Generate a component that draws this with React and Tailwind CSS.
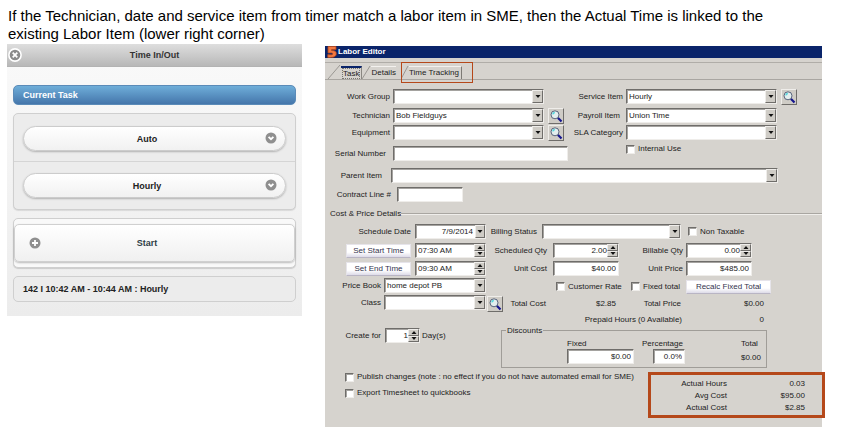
import { useId } from 'react';
import { clsx } from 'clsx';

const sunken = 'border border-t-[#6f6d6a] border-l-[#6f6d6a] border-r-[#efedea] border-b-[#efedea] bg-white shadow-[inset_1px_1px_0_#a5a3a0]';
const raised = 'border border-t-[#efedea] border-l-[#efedea] border-r-[#6f6d6a] border-b-[#6f6d6a] bg-[#cfccc6]';

const Triangle = ({ up = false }) => (
    <svg viewBox="0 0 6 3" className="w-[6px] h-[3px]">
        <path d={up ? 'M0.5 3L3 0L5.5 3Z' : 'M0.5 0L5.5 0L3 3Z'} fill="#111" />
    </svg>
);

const Select = ({ id, value = '', className, label }) => (
    <div className={clsx('relative h-[15px] min-w-0', className)}>
        <select id={id} aria-label={label} className={clsx('appearance-none block w-full h-full pl-[2px] pr-3 leading-none', sunken)}>
            <option>{value}</option>
        </select>
        <span className={clsx('absolute right-px top-px bottom-px w-[11px] flex items-center justify-center pointer-events-none', raised)}>
            <Triangle />
        </span>
    </div>
);

const TextBox = ({ id, value = '', className, label }) => (
    <input id={id} aria-label={label} defaultValue={value} className={clsx('block h-[15px] min-w-0 px-[2px]', sunken, className)} />
);

const Spinner = ({ id, value, className, label, right = false }) => (
    <div className={clsx('flex h-[15px] min-w-0', sunken, className)}>
        <input id={id} aria-label={label} defaultValue={value} className={clsx('flex-1 min-w-0 w-0 pl-[2px] bg-transparent', right && 'text-right')} />
        <span className="flex flex-col w-[11px]">
            <button aria-label="Increase" className={clsx('flex-1 flex items-center justify-center', raised)}><Triangle up /></button>
            <button aria-label="Decrease" className={clsx('flex-1 flex items-center justify-center', raised)}><Triangle /></button>
        </span>
    </div>
);

const SearchButton = ({ label, className }) => (
    <button aria-label={label} className={clsx('w-4 h-4 shrink-0 flex items-center justify-center', raised, className)}>
        <svg viewBox="0 0 14 14" className="w-[14px] h-[14px]">
            <path d="M8.8 8.8L12.5 12.5" stroke="#15158f" strokeWidth="2.2" />
            <circle cx="6" cy="5.8" r="4" fill="#e3eeee" stroke="#4a5570" strokeWidth="0.9" />
            <path d="M3.8 5.4A2.2 2.2 0 0 1 5.8 3.5" stroke="#47d5dc" strokeWidth="1.3" fill="none" />
        </svg>
    </button>
);

const CheckBox = ({ children, className }) => (
    <label className={clsx('flex items-center gap-[3px] whitespace-nowrap', className)}>
        <input type="checkbox" className={clsx('appearance-none w-[9px] h-[9px] shrink-0', sunken)} />
        {children}
    </label>
);

const PlainButton = ({ children, className }) => (
    <button className={clsx('h-[14px] border border-[#e6e4ea] border-b-[#b9b5c4] bg-gradient-to-b from-white from-60% to-[#dddbe8] text-[#33334d] whitespace-nowrap', className)}>
        {children}
    </button>
);

// label + control on one line, render gets the id for the control
const Field = ({ label, labelClass, className, render }) => {
    const id = useId();
    return (
        <div className={clsx('flex items-center h-[15px]', className)}>
            <label htmlFor={id} className={clsx('shrink-0 text-right whitespace-nowrap', labelClass)}>{label}</label>
            {render(id)}
        </div>
    );
};

const MobileSelect = ({ value }) => (
    <div className="relative h-[25px]">
        <select aria-label={value} className="appearance-none block w-full h-full pr-[15px] text-center [text-align-last:center] rounded-full border border-[#ccc] bg-gradient-to-b from-white to-[#f1f1f1] shadow-[0_1px_2px_rgba(0,0,0,0.25)] font-bold text-[#222]">
            <option>{value}</option>
        </select>
        <svg viewBox="0 0 12 12" className="absolute right-[9px] top-[6px] w-3 h-3 pointer-events-none">
            <circle cx="6" cy="6" r="5.5" fill="#8f8f8f" />
            <path d="M3.6 4.8L6 7.2L8.4 4.8" stroke="#fff" strokeWidth="1.8" fill="none" />
        </svg>
    </div>
);

const TimeInOut = () => (
    <section className="flex-[295] min-w-0 h-[272px] bg-gradient-to-b from-[#fafafa] to-[#ececec] text-[9px] leading-3 text-[#222] font-bold">
        <header className="relative h-[23px] flex items-center justify-center bg-gradient-to-b from-[#dedede] to-[#b8b8b8] border-b border-[#b3b3b3] text-[#333]">
            <button aria-label="Close" className="absolute left-px top-1">
                <svg viewBox="0 0 14 14" className="w-[14px] h-[14px]">
                    <circle cx="7" cy="7" r="6.1" fill="#8b8b8b" stroke="#fff" strokeWidth="1.6" />
                    <path d="M4.7 4.7L9.3 9.3M9.3 4.7L4.7 9.3" stroke="#fff" strokeWidth="1.8" />
                </svg>
            </button>
            <h2>Time In/Out</h2>
        </header>
        <div className="px-[6px] pt-[18px]">
            <div className="h-5 px-[9px] flex items-center rounded-[5px] border border-[#5b8bb8] bg-gradient-to-b from-[#6faed9] to-[#4576ab] text-white">
                Current Task
            </div>
            <div className="mt-2 rounded-[5px] border border-[#cfcfcf] bg-[#ececec] shadow-[0_1px_1px_rgba(0,0,0,0.1)]">
                <div className="px-[9px] pt-3 pb-[10px] border-b border-[#d5d5d5]">
                    <MobileSelect value="Auto" />
                </div>
                <div className="px-[9px] pt-[11px] pb-[11px]">
                    <MobileSelect value="Hourly" />
                </div>
            </div>
            <div className="mt-2 h-[50px] pt-[5px] rounded-[5px] border border-[#cfcfcf] bg-[#f9f9f9] shadow-[0_1px_1px_rgba(0,0,0,0.15)]">
                <button className="relative w-full h-[38px] pr-[15px] rounded-[5px] border border-[#d0d0d0] bg-gradient-to-b from-white to-[#f0f0f0] shadow-[0_1px_2px_rgba(0,0,0,0.25)] text-[#2f3e46]">
                    <svg viewBox="0 0 12 12" className="absolute left-[14px] top-3 w-3 h-3">
                        <circle cx="6" cy="6" r="5.5" fill="#8f8f8f" />
                        <path d="M6 3V9M3 6H9" stroke="#fff" strokeWidth="1.8" />
                    </svg>
                    Start
                </button>
            </div>
            <div className="mt-2 h-[26px] px-[9px] flex items-center rounded-[5px] border border-[#cfcfcf] bg-[#ececec]">
                142 I 10:42 AM - 10:44 AM : Hourly
            </div>
        </div>
    </section>
);

const Tabs = () => (
    <nav className="mt-1 h-[18px] flex items-stretch border-t border-t-[#b0ada8] border-b border-b-[#a9a6a1]">
        <svg viewBox="0 0 16 16" className="w-4 h-4 shrink-0">
            <path d="M3 16L15 2" stroke="#9a9792" fill="none" />
        </svg>
        <button className="mt-[3px] px-px border-t-2 border-t-[#0a246a] border-r border-r-[#8a8782]">
            <span className="block leading-[9px] border border-dotted border-[#77746f]">Task</span>
        </button>
        <svg viewBox="0 0 9 16" className="w-[9px] h-4 shrink-0">
            <path d="M0 16L8 3" stroke="#9a9792" fill="none" />
        </svg>
        <button className="mt-[3px] border-t border-[#f3f1ee]">Details</button>
        {/* highlighted tab */}
        <div className="relative ml-[5px] flex">
            <span className="absolute left-0 -top-px w-[72px] h-[21px] border border-[#b5481a] pointer-events-none"></span>
            <svg viewBox="0 0 8 16" className="w-2 h-4 shrink-0">
                <path d="M0 16L7 3" stroke="#9a9792" fill="none" />
            </svg>
            <button className="mt-[3px] pr-[2px] border-t border-t-[#f3f1ee] border-r border-r-[#7d7a75]">Time Tracking</button>
        </div>
    </nav>
);

const ItemDetails = () => (
    <div className="mt-[9px]">
        <div className="flex">
            <div className="flex-[243] min-w-0">
                <Field label="Work Group" labelClass="w-[65px]" render={id => <Select id={id} className="flex-1 ml-[3px] mr-6" />} />
                <Field label="Technician" labelClass="w-[65px]" className="mt-1" render={id => (
                    <>
                        <Select id={id} value="Bob Fieldguys" className="flex-1 ml-[3px]" />
                        <SearchButton label="Find technician" className="mx-1" />
                    </>
                )} />
                <Field label="Equipment" labelClass="w-[65px]" className="mt-[2px]" render={id => (
                    <>
                        <Select id={id} className="flex-1 ml-[3px]" />
                        <SearchButton label="Find equipment" className="mx-1" />
                    </>
                )} />
                <Field label="Serial Number" labelClass="w-[61px]" className="mt-[6px]" render={id => <TextBox id={id} className="flex-1 ml-[7px]" />} />
            </div>
            <div className="flex-[254] min-w-0">
                <Field label="Service Item" labelClass="w-[55px]" render={id => (
                    <>
                        <Select id={id} value="Hourly" className="flex-1 ml-[3px]" />
                        <SearchButton label="Find service item" className="ml-1 mr-[25px]" />
                    </>
                )} />
                <Field label="Payroll Item" labelClass="w-[52px]" className="mt-1" render={id => <Select id={id} value="Union Time" className="flex-1 ml-[6px] mr-[45px]" />} />
                <Field label="SLA Category" labelClass="w-[55px]" className="mt-[2px]" render={id => <Select id={id} className="flex-1 ml-[3px] mr-[45px]" />} />
                <CheckBox className="mt-1 ml-[58px] h-[10px]">Internal Use</CheckBox>
            </div>
        </div>
        <Field label="Parent Item" labelClass="w-[57px]" className="mt-[7px]" render={id => <Select id={id} className="flex-1 ml-[9px] mr-[44px]" />} />
        <Field label="Contract Line #" labelClass="w-[66px]" className="mt-1" render={id => <TextBox id={id} className="w-[66px] ml-[6px]" />} />
    </div>
);

const Discount = ({ label, value, box, className }) => {
    const id = useId();
    return (
        <div className={className}>
            <label htmlFor={id} className="block">{label}</label>
            <TextBox id={id} value={value} className={clsx('text-right', box)} />
        </div>
    );
};

const CostDetails = () => (
    <div className="flex">
        <div className="w-[161px] shrink-0">
            <Field label="Schedule Date" labelClass="w-[86px]" render={id => (
                <div className={clsx('flex flex-1 h-[15px] ml-1', sunken)}>
                    <input id={id} defaultValue="7/9/2014" className="flex-1 w-0 min-w-0 pr-[2px] text-right bg-transparent" />
                    <button aria-label="Open calendar" className={clsx('w-[10px] flex items-center justify-center', raised)}><Triangle /></button>
                </div>
            )} />
            <div className="mt-1 pl-[21px] flex items-center h-[15px]">
                <PlainButton className="w-[65px]">Set Start Time</PlainButton>
                <Spinner label="Start time" value="07:30 AM" className="flex-1 ml-1" />
            </div>
            <div className="mt-[3px] pl-[21px] flex items-center h-[15px]">
                <PlainButton className="w-[65px]">Set End Time</PlainButton>
                <Spinner label="End time" value="09:30 AM" className="flex-1 ml-1" />
            </div>
            <Field label="Price Book" labelClass="w-[56px]" className="mt-[2px]" render={id => <Select id={id} value="home depot PB" className="flex-1 ml-[3px]" />} />
            <Field label="Class" labelClass="w-[56px]" className="mt-[2px]" render={id => <Select id={id} className="flex-1 ml-[3px]" />} />
            <Field label="Create for" labelClass="w-[56px]" className="mt-[18px]" render={id => (
                <>
                    <Spinner id={id} value="1" right className="w-[35px] ml-1" />
                    <span className="ml-[2px]">Day(s)</span>
                </>
            )} />
        </div>

        <div className="flex-1 min-w-0">
            <div className="flex items-center h-[15px]">
                <Field label="Billing Status" labelClass="w-[51px]" className="flex-1" render={id => <Select id={id} className="flex-1 ml-[5px]" />} />
                <CheckBox className="ml-[7px] w-[134px]">Non Taxable</CheckBox>
            </div>
            <div className="flex mt-1 pr-[70px]">
                <Field label="Scheduled Qty" labelClass="w-[61px]" className="flex-[133]" render={id => <Spinner id={id} value="2.00" right className="flex-1 ml-[6px]" />} />
                <Field label="Billable Qty" labelClass="w-[64px]" className="flex-[133]" render={id => <Spinner id={id} value="0.00" right className="flex-1 ml-[3px]" />} />
            </div>
            <div className="flex mt-[3px] pr-[70px]">
                <Field label="Unit Cost" labelClass="w-[61px]" className="flex-[133]" render={id => <TextBox id={id} value="$40.00" className="flex-1 w-0 ml-[6px] text-right" />} />
                <Field label="Unit Price" labelClass="w-[64px]" className="flex-[133]" render={id => <TextBox id={id} value="$485.00" className="flex-1 w-0 ml-[3px] text-right" />} />
            </div>
            <div className="flex mt-[3px] pl-[70px] h-[15px] items-center">
                <CheckBox className="w-[75px]">Customer Rate</CheckBox>
                <CheckBox className="w-[55px]">Fixed total</CheckBox>
                <PlainButton className="w-[85px]">Recalc Fixed Total</PlainButton>
            </div>
            <div className="flex items-center mt-[2px] pl-px pr-[58px] h-[15px] whitespace-nowrap">
                <SearchButton label="Find class" />
                <span className="w-[43px] text-right">Total Cost</span>
                <span className="flex-[70] text-right">$2.85</span>
                <span className="w-[65px] text-right">Total Price</span>
                <span className="flex-[83] text-right">$0.00</span>
            </div>
            <div className="flex justify-end mt-[3px] pr-[58px] leading-[11px]">
                <span>Prepaid Hours (0 Available)</span>
                <span className="w-[82px] text-right">0</span>
            </div>
            <fieldset className="relative h-[38px] mt-[5px] ml-[15px] mr-[55px] border border-[#a09d98]">
                <legend className="absolute -top-[5px] left-1 px-px bg-[#d6d3ce] leading-[10px]">Discounts</legend>
                <div className="flex pt-[7px] pl-[65px] leading-[11px]">
                    <Discount label="Fixed" value="$0.00" box="w-[67px]" />
                    <Discount label="Percentage" value="0.0%" box="w-[32px] ml-auto" className="ml-2 w-[43px]" />
                    <div className="ml-auto pr-[5px]">
                        <div>Total</div>
                        <div className="mt-[3px]">$0.00</div>
                    </div>
                </div>
            </fieldset>
        </div>
    </div>
);

const actuals = [
    { label: 'Actual Hours', value: '0.03' },
    { label: 'Avg Cost', value: '$95.00' },
    { label: 'Actual Cost', value: '$2.85' },
];

const LaborEditor = () => (
    <section className="flex-[497] min-w-0 mt-[2px] h-[381px] bg-[#d6d3ce] text-[8px] leading-[10px] text-[#222]">
        <header className="h-3 pl-[2px] flex items-center gap-px bg-[#0a246a] text-white font-bold">
            <svg viewBox="0 0 10 12" className="w-[10px] h-3">
                <path d="M1 0.5H9V3.6H4.6V4.6C7.8 4.4 9.4 5.6 9.3 7.8C9.2 10.6 6.6 11.8 0.8 11.4V8.6C4 9 5.8 8.9 5.8 7.8C5.8 6.8 4.2 6.8 1 7Z" fill="#f47a42" stroke="#b5481a" strokeWidth="0.8" />
            </svg>
            <h2 className="leading-3">Labor Editor</h2>
        </header>
        <Tabs />
        <ItemDetails />
        <div className="flex items-center mt-[7px] mb-[5px] pl-[5px] h-[10px]">
            <h3>Cost &amp; Price Details</h3>
            <div className="flex-1 h-[2px] border-t border-[#a9a6a1] bg-[#f0eeeb]"></div>
        </div>
        <CostDetails />
        <div className="flex mt-1">
            <div className="flex-1 pl-5">
                <CheckBox className="h-[10px]">Publish changes (note : no effect if you do not have automated email for SME)</CheckBox>
                <CheckBox className="mt-[6px] h-[10px]">Export Timesheet to quickbooks</CheckBox>
            </div>
            <dl className="w-[177px] h-[46px] -mr-[3px] pt-[3px] pr-[17px] border-3 border-[#b5481a] leading-3">
                {actuals.map(item => (
                    <div key={item.label} className="flex justify-between">
                        <dt className="w-[76px] text-right">{item.label}</dt>
                        <dd>{item.value}</dd>
                    </div>
                ))}
            </dl>
        </div>
    </section>
);

export default function App() {
    return (
        <main className="bg-white pt-[7px] pl-[7px] pr-[21px] pb-[11px] font-['Liberation_Sans',Arial,sans-serif]">
            <p className="text-[15px] leading-[18px] text-black pl-px pr-8">
                If the Technician, date and service item from timer match a labor item in SME, then the Actual Time is linked to the existing Labor Item (lower right corner)
            </p>
            <div className="flex items-start gap-[23px] mt-px">
                <TimeInOut />
                <LaborEditor />
            </div>
        </main>
    );
}
